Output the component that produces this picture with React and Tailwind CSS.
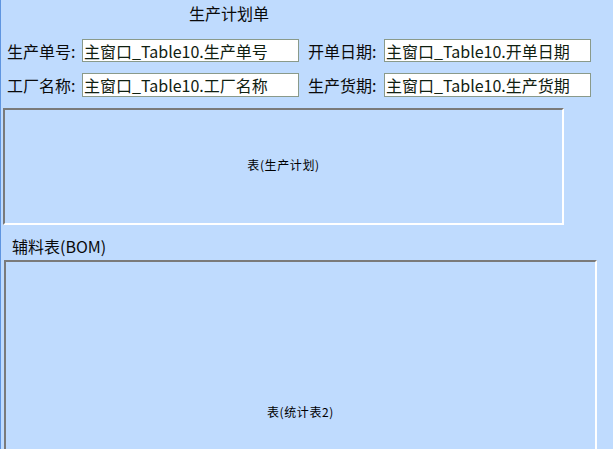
import React from "react";

const font = "font-['Noto_Sans_CJK_SC','Noto_Sans',sans-serif]";

function Field({ label, value, labelW, inputW, h, className = "" }) {
  return (
    <div className={"flex items-center " + className}>
      <div className={"text-[16px] leading-[20px] text-[#0a0a0a] whitespace-nowrap " + labelW}>{label}</div>
      <div
        className={
          "flex items-center border border-[#8a9a8a] bg-white pl-[1px] text-[16px] leading-[20px] text-[#102010] whitespace-nowrap overflow-hidden " +
          inputW + " " + h
        }
      >
        {value}
      </div>
    </div>
  );
}

export default function App() {
  return (
    <div className={"w-[613px] h-[449px] overflow-hidden bg-[#bfdbfe] border-l border-[#5f95e0] " + font}>
      <div className="h-[39px] pt-[3px] pl-[188px] text-[16px] leading-[20px] text-[#0a0a0a]">生产计划单</div>

      <div className="flex pl-[6px]">
        <Field label="生产单号:" value="主窗口_Table10.生产单号" labelW="w-[75px]" inputW="w-[217px]" h="h-[23px]" />
        <Field label="开单日期:" value="主窗口_Table10.开单日期" labelW="w-[76px]" inputW="w-[207px]" h="h-[23px]" className="ml-[9px]" />
      </div>

      <div className="flex pl-[6px] mt-[11px]">
        <Field label="工厂名称:" value="主窗口_Table10.工厂名称" labelW="w-[75px]" inputW="w-[217px]" h="h-[24px]" />
        <Field label="生产货期:" value="主窗口_Table10.生产货期" labelW="w-[76px]" inputW="w-[207px]" h="h-[24px]" className="ml-[9px]" />
      </div>

      <div className="ml-[2px] mt-[11px] w-[561px] h-[117px] pb-[3px] border-2 border-t-[#7a7a7a] border-l-[#7a7a7a] border-b-white border-r-white flex items-center justify-center text-[12px] leading-[14px] tracking-[0.6px] text-black">
        表(生产计划)
      </div>

      <div className="mt-[11px] pl-[11px] h-[20px] text-[16px] leading-[20px] text-[#0a0a0a]">辅料表(BOM)</div>

      <div className="ml-[3px] mt-[4px] w-[593px] h-[306px] pb-[2px] border-2 border-t-[#7a7a7a] border-l-[#7a7a7a] border-b-white border-r-white flex items-center justify-center text-[12px] leading-[14px] tracking-[0.6px] text-black">
        表(统计表2)
      </div>
    </div>
  );
}
